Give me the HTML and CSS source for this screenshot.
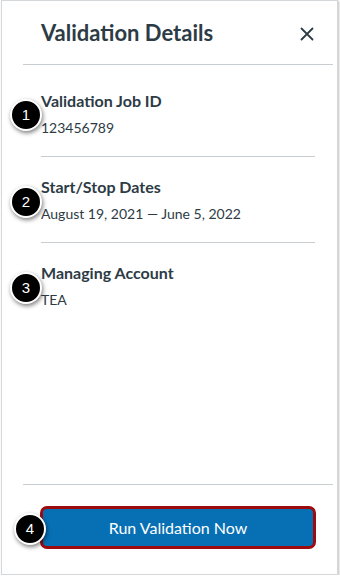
FILE: index.html
```html
<!DOCTYPE html>
<html>
<head>
<meta charset="utf-8">
<link rel="stylesheet" href="styles.css">
</head>
<body>
<div class="panel">
  <div class="header">
    <h1 class="title">Validation Details</h1>
    <svg class="close" width="14" height="14" viewBox="0 0 14 14"><path d="M1.5 1.5 L12.5 12.5 M12.5 1.5 L1.5 12.5" stroke="#2d3b45" stroke-width="1.8" stroke-linecap="round"/></svg>
  </div>
  <div class="content">
    <div class="item">
      <span class="callout">1</span>
      <div class="label">Validation Job ID</div>
      <div class="value">123456789</div>
    </div>
    <div class="item">
      <span class="callout">2</span>
      <div class="label">Start/Stop Dates</div>
      <div class="value">August 19, 2021 — June 5, 2022</div>
    </div>
    <div class="item last">
      <span class="callout">3</span>
      <div class="label">Managing Account</div>
      <div class="value">TEA</div>
    </div>
  </div>
  <div class="footer">
    <div class="btn-wrap">
      <span class="callout callout-btn">4</span>
      <button class="run-btn">Run Validation Now</button>
    </div>
  </div>
</div>
</body>
</html>
```
FILE: styles.css
```css
html, body {
  margin: 0;
  padding: 0;
  background: #fff;
}
body {
  font-family: Lato, "Liberation Sans", sans-serif;
  color: #2d3b45;
}
.panel {
  position: relative;
  margin-left: 1px;
  width: 335px;
  height: 573px;
  border: 1px solid #d4d8db;
  box-shadow: 1px 1px 2px rgba(0,0,0,0.25);
  display: flex;
  flex-direction: column;
  background: #fff;
}
.header {
  margin: 0 4px 0 21px;
  height: 63px;
  border-bottom: 1px solid #c7cdd1;
  display: flex;
  align-items: center;
  justify-content: space-between;
  padding: 0 19px 0 18px;
}
.title {
  margin: 0;
  font-size: 22px;
  font-weight: 700;
  line-height: 28px;
  margin-top: 0;
}
.close {
  margin-top: 2px;
}
.content {
  flex: 1;
  padding: 18px 22px 0 39px;
}
.item {
  position: relative;
  padding: 8px 0 18px;
  border-bottom: 1px solid #c7cdd1;
}
.item + .item {
  padding-top: 20px;
}
.item.last {
  border-bottom: none;
}
.label {
  font-size: 16px;
  font-weight: 700;
  line-height: 20px;
}
.value {
  font-size: 14px;
  line-height: 20px;
  margin-top: 7px;
}
.callout {
  position: absolute;
  left: -31px;
  width: 28px;
  height: 28px;
  border-radius: 50%;
  background: #000;
  color: #fff;
  border: 2px solid #fff;
  box-shadow: 1px 2px 4px rgba(0,0,0,0.5);
  font-family: "Liberation Sans", Arial, sans-serif;
  font-size: 15px;
  line-height: 28px;
  text-align: center;
  top: 16px;
}
.item + .item .callout {
  top: 29px;
}
.footer {
  margin: 0 4px 0 21px;
  border-top: 1px solid #c7cdd1;
  padding: 21px 0 25px 17px;
}
.btn-wrap {
  position: relative;
  width: 276px;
}
.run-btn {
  display: block;
  width: 276px;
  height: 43px;
  background: #0770b5;
  border: 3px solid #9e0b0f;
  border-radius: 7px;
  color: #fff;
  font-family: Lato, "Liberation Sans", sans-serif;
  font-size: 16px;
  padding: 0;
}
.callout-btn {
  left: -26px;
  top: 7px;
}
```
